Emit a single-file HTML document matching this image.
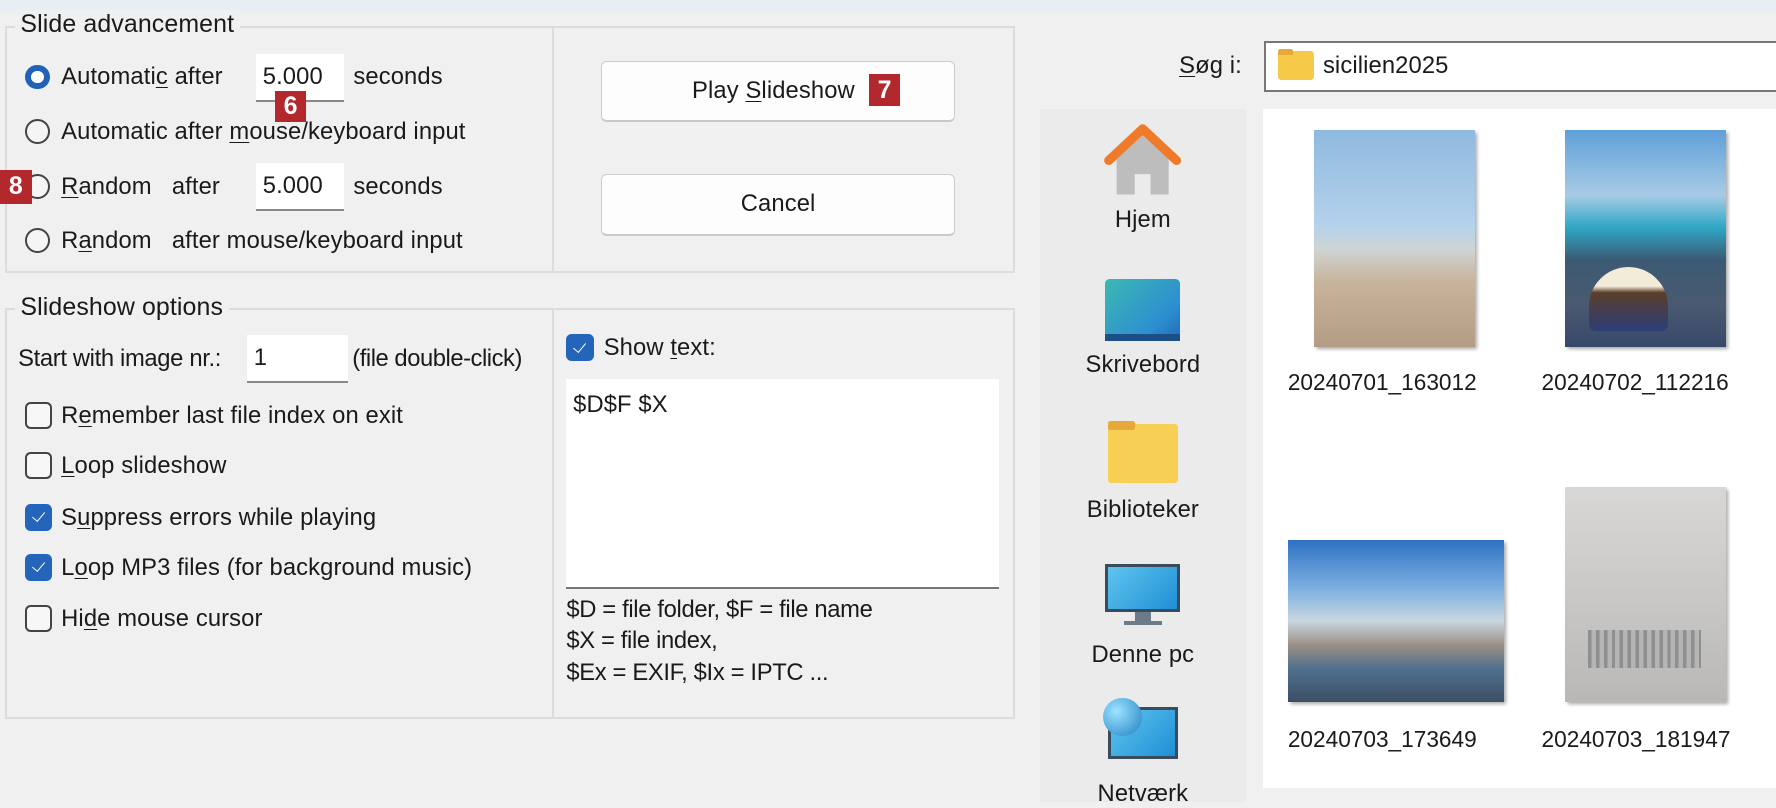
<!DOCTYPE html>
<html><head><meta charset="utf-8"><style>
html,body{margin:0;padding:0;}
body{width:1568px;height:708px;zoom:1.13266;background:#f0f0f0;position:relative;overflow:hidden;font-family:"Liberation Sans",sans-serif;font-size:21px;color:#1a1a1a;letter-spacing:0.1px;}
.a{position:absolute;white-space:nowrap;}
.grp{position:absolute;border:2px solid #dcdcdc;box-sizing:border-box;}
.vd{position:absolute;width:2px;background:#dcdcdc;}
.title{position:absolute;background:#f0f0f0;padding:0 5px;font-size:22px;}
.radio{position:absolute;width:22px;height:22px;border:2px solid #444;border-radius:50%;box-sizing:border-box;background:#f5f5f5;}
.radio.on{border:6px solid #2062b8;background:#fff;}
.cb{position:absolute;width:24px;height:24px;border:2px solid #444;border-radius:5px;box-sizing:border-box;background:#f7f7f7;}
.cb.on{background:#2465bb;border-color:#2465bb;}
.cb.on:after{content:"";position:absolute;left:7px;top:3px;width:5px;height:10px;border:solid #fff;border-width:0 1.5px 1.5px 0;transform:rotate(40deg);}
.inp{position:absolute;background:#fff;border-bottom:2px solid #888;box-sizing:border-box;padding:8px 0 0 6px;}
.btn{position:absolute;background:#fdfdfd;border:1px solid #ccc;border-bottom:2px solid #c8c8c8;border-radius:5px;box-sizing:border-box;text-align:center;}
.badge{position:absolute;background:#b3282d;color:#fff;font-weight:bold;font-size:22px;text-align:center;letter-spacing:0;}
u{text-decoration-thickness:1px;text-underline-offset:3px;}
.nav{position:absolute;text-align:center;width:182px;left:0;font-size:21px;}
.fn{font-size:20px;letter-spacing:0;}
</style></head><body>
<div class="a" style="left:0;top:0;width:1568px;height:11px;background:#e8eef4"></div>

<!-- Slide advancement -->
<div class="grp" style="left:4px;top:23px;width:892px;height:218px"></div>
<div class="vd" style="left:487px;top:24px;height:216px"></div>
<div class="title" style="left:13px;top:9px">Slide advancement</div>
<div class="radio on" style="left:22px;top:57px"></div>
<div class="a" style="left:54px;top:56px">Automati<u>c</u> after</div>
<div class="inp" style="left:226px;top:48px;width:78px;height:42px">5.000</div>
<div class="a" style="left:312px;top:56px">seconds</div>
<div class="radio" style="left:22px;top:105px"></div>
<div class="a" style="left:54px;top:104px">Automatic after <u>m</u>ouse/keyboard input</div>
<div class="radio" style="left:22px;top:154px"></div>
<div class="a" style="left:54px;top:153px"><u>R</u>andom&nbsp;&nbsp; after</div>
<div class="inp" style="left:226px;top:144px;width:78px;height:42px">5.000</div>
<div class="a" style="left:312px;top:153px">seconds</div>
<div class="radio" style="left:22px;top:201px"></div>
<div class="a" style="left:54px;top:200px">R<u>a</u>ndom&nbsp;&nbsp; after mouse/keyboard input</div>
<div class="badge" style="left:243px;top:80px;width:27px;height:28px;line-height:28px">6</div>
<div class="badge" style="left:0;top:150px;width:28px;height:30px;line-height:30px">8</div>
<div class="btn" style="left:531px;top:54px;width:312px;height:54px;"></div>
<div class="a" style="left:611px;top:68px">Play <u>S</u>lideshow</div>
<div class="badge" style="left:767px;top:65px;width:28px;height:29px;line-height:29px">7</div>
<div class="btn" style="left:531px;top:154px;width:312px;height:54px;line-height:52px">Cancel</div>

<!-- Slideshow options -->
<div class="grp" style="left:4px;top:272px;width:892px;height:363px"></div>
<div class="vd" style="left:487px;top:273px;height:361px"></div>
<div class="title" style="left:13px;top:259px">Slideshow options</div>
<div class="a" style="left:16px;top:305px;letter-spacing:-0.3px">Start with image nr.:</div>
<div class="inp" style="left:218px;top:296px;width:89px;height:42px">1</div>
<div class="a" style="left:311px;top:305px;letter-spacing:-0.4px">(file double-click)</div>
<div class="cb" style="left:22px;top:355px"></div><div class="a" style="left:54px;top:355px">R<u>e</u>member last file index on exit</div>
<div class="cb" style="left:22px;top:399px"></div><div class="a" style="left:54px;top:399px"><u>L</u>oop slideshow</div>
<div class="cb on" style="left:22px;top:445px"></div><div class="a" style="left:54px;top:445px">S<u>u</u>ppress errors while playing</div>
<div class="cb on" style="left:22px;top:489px"></div><div class="a" style="left:54px;top:489px">L<u>o</u>op MP3 files (for background music)</div>
<div class="cb" style="left:22px;top:534px"></div><div class="a" style="left:54px;top:534px">Hi<u>d</u>e mouse cursor</div>
<div class="cb on" style="left:500px;top:295px"></div><div class="a" style="left:533px;top:295px">Show <u>t</u>ext:</div>
<div class="a" style="left:500px;top:335px;width:382px;height:185px;background:#fff;border-bottom:2px solid #777;box-sizing:border-box"></div>
<div class="a" style="left:506px;top:345px">$D$F $X</div>
<div class="a" style="left:500px;top:524px;line-height:28px;letter-spacing:-0.3px">$D = file folder, $F = file name<br>$X = file index,<br>$Ex = EXIF, $Ix = IPTC ...</div>

<!-- File dialog -->
<div class="a" style="left:1041px;top:46px;font-size:21px"><u>S</u>øg i:</div>
<div class="a" style="left:1116px;top:36px;width:460px;height:45px;background:#fff;border:2px solid #777;box-sizing:border-box"></div>
<div class="a" style="left:1128px;top:45px;width:32px;height:26px;background:#f7c948;border-radius:3px"></div>
<div class="a" style="left:1128px;top:43px;width:14px;height:6px;background:#e8a93a;border-radius:2px 2px 0 0"></div>
<div class="a" style="left:1168px;top:46px;font-size:21px">sicilien2025</div>

<div class="a" style="left:918px;top:96px;width:182px;height:612px;background:#ebebeb">
  <svg class="a" style="left:56px;top:12px" width="70" height="70" viewBox="0 0 70 70">
    <path d="M12 32 L35 10 L58 32 V64 H42 V46 H28 V64 H12 Z" fill="#bdbdbd"/>
    <path d="M5 34 L35 6 L65 34" fill="none" stroke="#ef7a2a" stroke-width="8" stroke-linejoin="round" stroke-linecap="round"/>
  </svg>
  <div class="nav" style="top:86px">Hjem</div>
  <div class="a" style="left:58px;top:150px;width:66px;height:55px;border-radius:4px;background:linear-gradient(135deg,#3cb8b3,#2d8fd0 70%,#1f6bb8)"></div>
  <div class="a" style="left:58px;top:199px;width:66px;height:6px;background:#1c4f86"></div>
  <div class="nav" style="top:214px">Skrivebord</div>
  <div class="a" style="left:60px;top:278px;width:62px;height:52px;background:#f8cf55;border-radius:3px"></div>
  <div class="a" style="left:60px;top:276px;width:24px;height:8px;background:#e9a93a;border-radius:2px"></div>
  <div class="nav" style="top:342px">Biblioteker</div>
  <div class="a" style="left:58px;top:402px;width:66px;height:42px;background:linear-gradient(135deg,#5fc4ee,#1f8fd6);border:3px solid #3a4b5c;box-sizing:border-box"></div>
  <div class="a" style="left:84px;top:444px;width:14px;height:8px;background:#6b7b8a"></div>
  <div class="a" style="left:74px;top:452px;width:34px;height:4px;background:#6b7b8a"></div>
  <div class="nav" style="top:470px">Denne pc</div>
  <div class="a" style="left:60px;top:528px;width:62px;height:46px;background:linear-gradient(135deg,#5fc4ee,#1f8fd6);border:3px solid #3a4b5c;box-sizing:border-box"></div>
  <div class="a" style="left:56px;top:520px;width:34px;height:34px;border-radius:50%;background:radial-gradient(circle at 35% 35%,#9fe3ff,#1d7fc4)"></div>
  <div class="nav" style="top:593px">Netværk</div>
</div>

<div class="a" style="left:1115px;top:96px;width:460px;height:600px;background:#fff"></div>
<div class="a" style="left:1160px;top:115px;width:142px;height:191px;background:linear-gradient(180deg,#8fb9e0 0%,#b5d2ea 45%,#cfd4d3 55%,#c8b49b 70%,#b39c84 100%);box-shadow:2px 2px 3px #aaa"></div>
<div class="a" style="left:1382px;top:115px;width:142px;height:191px;background:linear-gradient(180deg,#5f9fd8 0%,#a8cbe6 30%,#2fa7c5 45%,#3c5a74 60%,#4a5a70 80%,#38486a 100%);box-shadow:2px 2px 3px #aaa"></div>
<div class="a" style="left:1403px;top:236px;width:70px;height:56px;border-radius:35px 35px 6px 6px;background:linear-gradient(180deg,#f2ecd9 30%,#5b3e2a 40%,#2c3e78 100%)"></div>
<div class="a fn" style="left:1137px;top:326px">20240701_163012</div>
<div class="a fn" style="left:1361px;top:326px">20240702_112216</div>
<div class="a" style="left:1137px;top:477px;width:191px;height:143px;background:linear-gradient(180deg,#2e71c4 0%,#7db0e0 30%,#c9d6df 50%,#9b8f86 65%,#4d6f8c 80%,#3d4f66 100%);box-shadow:2px 2px 3px #aaa"></div>
<div class="a" style="left:1382px;top:430px;width:142px;height:190px;background:linear-gradient(180deg,#d8d7d5 0%,#c9c8c6 50%,#b9b8b6 100%);box-shadow:2px 2px 3px #aaa"></div>
<div class="a" style="left:1402px;top:556px;width:100px;height:34px;background:repeating-linear-gradient(90deg,#8f8f8f 0 3px,#b5b5b5 3px 7px)"></div>
<div class="a fn" style="left:1137px;top:641px">20240703_173649</div>
<div class="a fn" style="left:1361px;top:641px">20240703_181947</div>
</body></html>
